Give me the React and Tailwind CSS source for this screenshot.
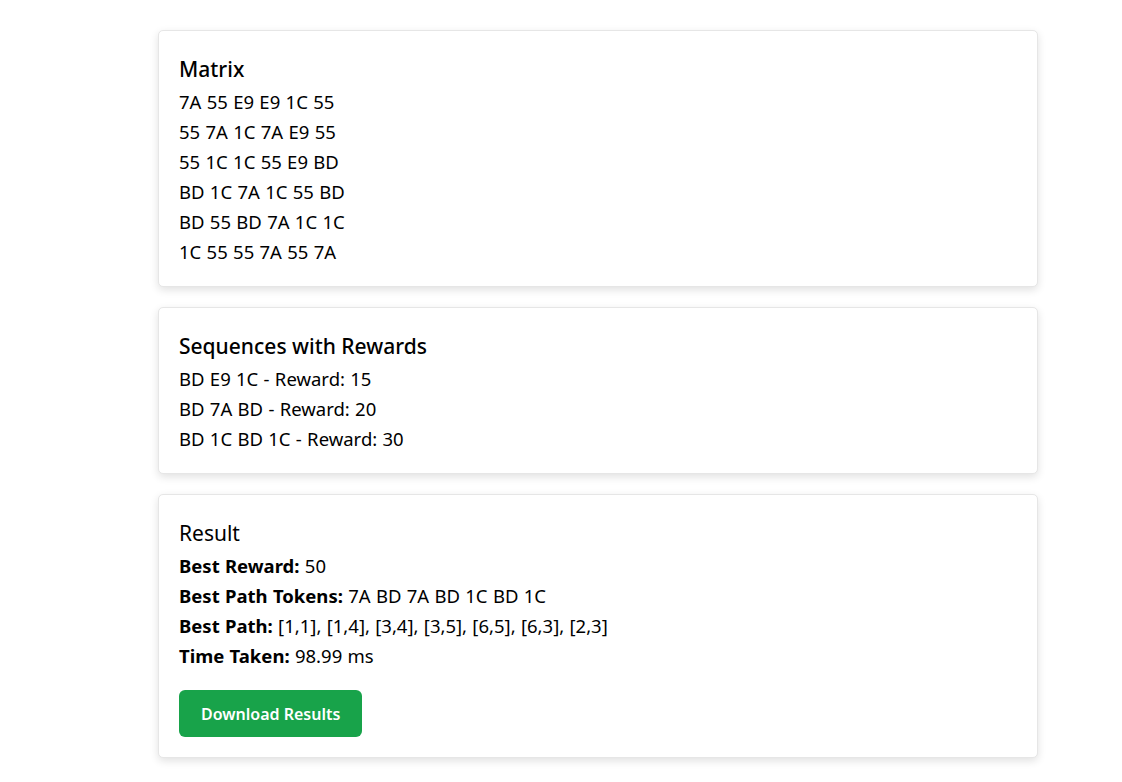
import React from "react";

const matrix = [
  "7A 55 E9 E9 1C 55",
  "55 7A 1C 7A E9 55",
  "55 1C 1C 55 E9 BD",
  "BD 1C 7A 1C 55 BD",
  "BD 55 BD 7A 1C 1C",
  "1C 55 55 7A 55 7A",
];

const sequences = [
  { tokens: "BD E9 1C", reward: 15 },
  { tokens: "BD 7A BD", reward: 20 },
  { tokens: "BD 1C BD 1C", reward: 30 },
];

const Card = ({ children, className = "" }) => (
  <div className={`bg-white border border-[#e6e6e6] rounded-[5px] shadow-[0_3px_8px_rgba(0,0,0,0.12)] px-5 pt-[21px] ${className}`}>
    {children}
  </div>
);

export default function App() {
  return (
    <div className="min-h-screen bg-white text-black font-['Noto_Sans',sans-serif] text-[18.5px] leading-[30px] [word-spacing:0.5px]">
      <div className="pl-[158px] pt-[30px] pb-[24px] w-[1038px] flex flex-col gap-[20px]">
        {/* Matrix */}
        <Card className="pb-[19px]">
          <h3 className="text-[21px] leading-[35px] font-medium [word-spacing:0]">Matrix</h3>
          {matrix.map((row, i) => (
            <div key={i}>{row}</div>
          ))}
        </Card>

        {/* Sequences */}
        <Card className="pb-[19px]">
          <h3 className="text-[21px] leading-[35px] font-medium [word-spacing:0]">Sequences with Rewards</h3>
          {sequences.map((s, i) => (
            <div key={i}>
              {s.tokens} - Reward: {s.reward}
            </div>
          ))}
        </Card>

        {/* Result */}
        <Card className="pb-[20px]">
          <h3 className="text-[21px] leading-[35px] font-normal [word-spacing:0]">Result</h3>
          <div>
            <b className="font-bold">Best Reward:</b> 50
          </div>
          <div>
            <b className="font-bold">Best Path Tokens:</b> 7A BD 7A BD 1C BD 1C
          </div>
          <div>
            <b className="font-bold">Best Path:</b> [1,1], [1,4], [3,4], [3,5], [6,5], [6,3], [2,3]
          </div>
          <div>
            <b className="font-bold">Time Taken:</b> 98.99 ms
          </div>
          <button className="mt-[19px] h-[47px] px-[22px] rounded-[6px] bg-[#18a34a] text-white text-[16px] font-semibold leading-none [word-spacing:0]">
            Download Results
          </button>
        </Card>
      </div>
    </div>
  );
}
